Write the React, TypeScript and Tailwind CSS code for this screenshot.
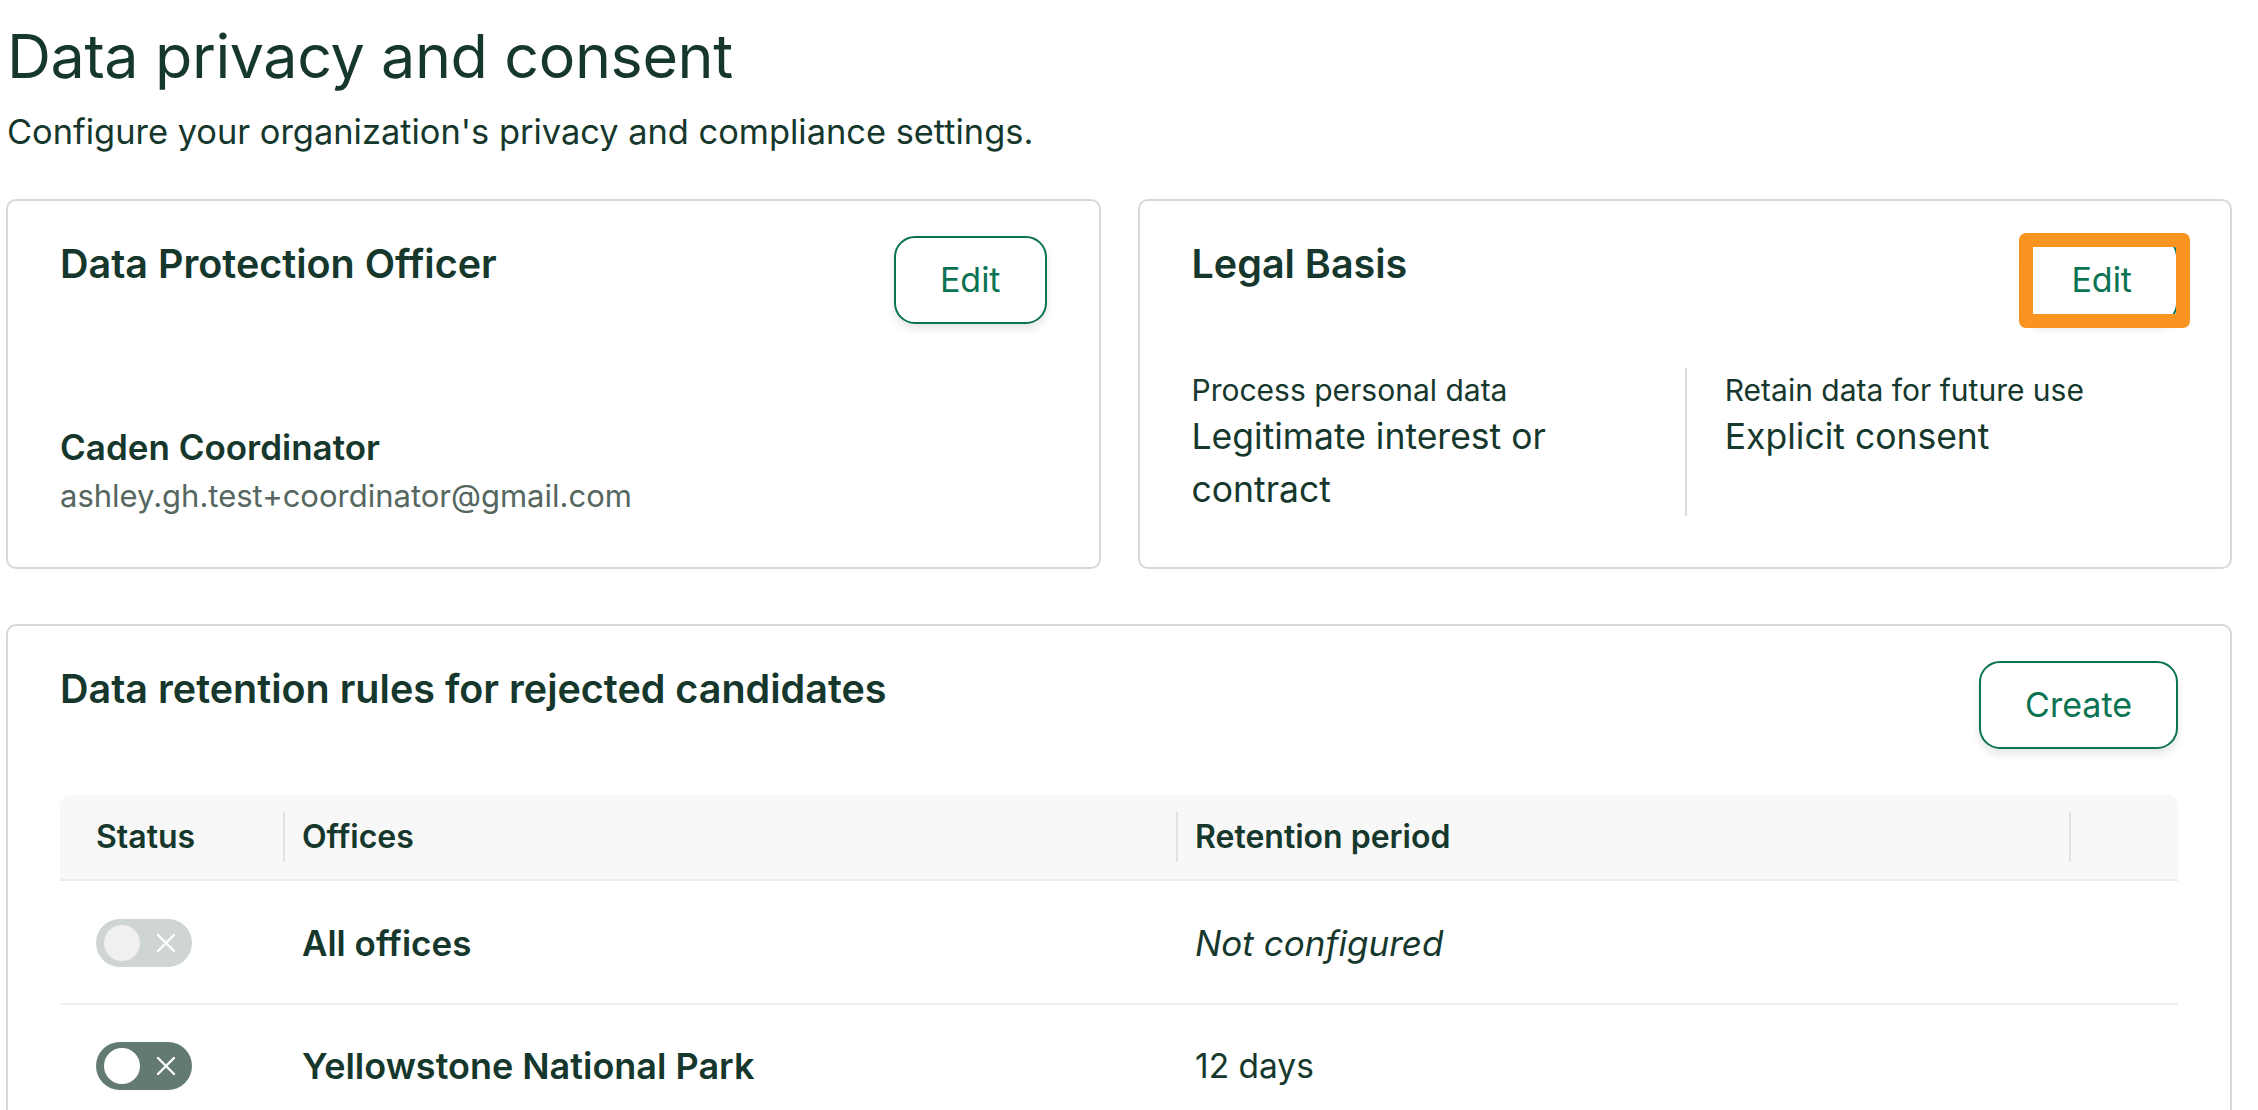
import React from "react";

const ink = "text-[#15372c]";

function OutlineButton({ label }: { label: string }) {
  return (
    <button className="h-[88px] px-[44px] rounded-[21px] border-[2.5px] border-[#0a7352] bg-white text-[34px] leading-none text-[#0a7352] shadow-[0_5px_8px_rgba(0,0,0,0.10)]">
      {label}
    </button>
  );
}

function Toggle({ on }: { on: boolean }) {
  return (
    <div
      className={
        "flex h-[48px] w-[96px] items-center rounded-full pl-[8px] " +
        (on ? "bg-[#637a70]" : "bg-[#cfd5d2]")
      }
    >
      <div
        className={
          "h-[36px] w-[36px] rounded-full " + (on ? "bg-white" : "bg-[#f0f0f0]")
        }
      />
      <svg className="ml-[16px]" width="20" height="20" viewBox="0 0 20 20">
        <path d="M2 2 L18 18 M18 2 L2 18" stroke="white" strokeWidth="2.4" strokeLinecap="round" />
      </svg>
    </div>
  );
}

export default function App() {
  return (
    <div
      className={"h-[1110px] w-full overflow-hidden bg-white pl-[6px] pr-[26px] pt-[26px] " + ink}
      style={{ fontFamily: "Inter, 'Liberation Sans', sans-serif" }}
    >
      <h1 className="pl-[1px] text-[61px] font-normal leading-none tracking-[-0.4px]">
        Data privacy and consent
      </h1>
      <p className="mt-[28px] pl-[1px] text-[34.4px] leading-none">
        Configure your organization's privacy and compliance settings.
      </p>

      <div className="mt-[50px] grid grid-cols-2 gap-[37px]">
        {/* Data Protection Officer */}
        <section className="h-[370px] rounded-[10px] border-2 border-[#d5dad8] px-[52px] pt-[35px]">
          <div className="flex items-start justify-between">
            <h2 className="mt-[9px] text-[39.5px] font-semibold leading-none">
              Data Protection Officer
            </h2>
            <OutlineButton label="Edit" />
          </div>
          <div className="mt-[106px] text-[35px] font-semibold leading-none">
            Caden Coordinator
          </div>
          <div className="mt-[15px] text-[31px] leading-none text-[#55675f]">
            ashley.gh.test+coordinator@gmail.com
          </div>
        </section>

        {/* Legal Basis */}
        <section className="h-[370px] rounded-[10px] border-2 border-[#d5dad8] px-[52px] pt-[35px]">
          <div className="flex items-start justify-between">
            <h2 className="mt-[9px] text-[39.5px] font-semibold leading-none">Legal Basis</h2>
            <div className="relative">
              <OutlineButton label="Edit" />
              <div className="pointer-events-none absolute -bottom-[4px] -left-[6px] -right-[12px] -top-[3px] rounded-[7px] border-[14px] border-[#f8941f]" />
            </div>
          </div>
          <div className="mt-[44px] grid grid-cols-2">
            <div className="pt-[7px]">
              <div className="text-[30px] leading-none">Process personal data</div>
              <div className="mt-[5px] text-[35.5px] leading-[53px]">
                Legitimate interest or
                <br />
                contract
              </div>
            </div>
            <div className="border-l-2 border-[#d9dcdb] pl-[38px] pt-[7px]">
              <div className="text-[30px] leading-none">Retain data for future use</div>
              <div className="mt-[5px] text-[35.5px] leading-[53px]">Explicit consent</div>
            </div>
          </div>
        </section>
      </div>

      {/* Retention rules */}
      <section className="mt-[55px] h-[600px] rounded-[10px] border-2 border-[#d5dad8] px-[52px] pt-[35px]">
        <div className="flex items-start justify-between">
          <h2 className="mt-[9px] text-[39.5px] font-semibold leading-none">
            Data retention rules for rejected candidates
          </h2>
          <OutlineButton label="Create" />
        </div>

        <div className="mt-[46px]">
          <div className="grid h-[86px] grid-cols-[223px_893px_893px_1fr] rounded-t-[10px] border-b-2 border-[#ececec] bg-[#f8f8f8] text-[32px] font-semibold">
            <div className="flex items-center pl-[36px]">Status</div>
            <div className="flex items-center">
              <span className="h-[50px] w-[2px] bg-[#e2e2e2]" />
              <span className="pl-[17px] leading-none">Offices</span>
            </div>
            <div className="flex items-center">
              <span className="h-[50px] w-[2px] bg-[#e2e2e2]" />
              <span className="pl-[17px] leading-none">Retention period</span>
            </div>
            <div className="flex items-center">
              <span className="h-[50px] w-[2px] bg-[#e2e2e2]" />
            </div>
          </div>

          <div className="grid h-[124px] grid-cols-[223px_893px_893px_1fr] border-b-2 border-[#efefef]">
            <div className="flex items-center pl-[36px] pt-[2px]">
              <Toggle on={false} />
            </div>
            <div className="flex items-center pl-[19px] pt-[2px] text-[35px] font-semibold">All offices</div>
            <div className="flex items-center pl-[19px] pt-[2px] text-[35px] italic">Not configured</div>
            <div />
          </div>

          <div className="grid h-[124px] grid-cols-[223px_893px_893px_1fr] border-b-2 border-[#efefef]">
            <div className="flex items-center pl-[36px]">
              <Toggle on={true} />
            </div>
            <div className="flex items-center pl-[19px] text-[36px] font-semibold">
              Yellowstone National Park
            </div>
            <div className="flex items-center pl-[19px] text-[33.5px]">12 days</div>
            <div />
          </div>
        </div>
      </section>
    </div>
  );
}
